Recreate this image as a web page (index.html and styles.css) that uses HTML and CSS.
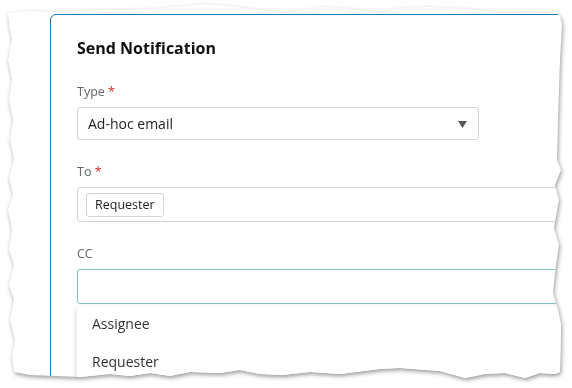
FILE: index.html
```html
<!DOCTYPE html>
<html lang="en">
<head>
    <meta charset="UTF-8">
    <meta name="viewport" content="width=device-width, initial-scale=1.0">
    <title>Send Notification</title>
    <link rel="stylesheet" href="styles.css">
</head>
<body>
    <div class="page">
        <div class="sheet">
            <div class="card">
                <h1>Send Notification</h1>

                <div class="form-group">
                    <label>Type <span class="req">*</span></label>
                    <div class="select">
                        <span>Ad-hoc email</span>
                        <svg class="caret" width="9" height="7" viewBox="0 0 9 7"><polygon points="0,0 9,0 4.5,7" fill="#555"/></svg>
                    </div>
                </div>

                <div class="form-group">
                    <label>To <span class="req">*</span></label>
                    <div class="tags">
                        <span class="chip">Requester</span>
                    </div>
                </div>

                <div class="form-group">
                    <label>CC</label>
                    <div class="tags focused"></div>
                    <ul class="menu">
                        <li>Assignee</li>
                        <li>Requester</li>
                    </ul>
                </div>
            </div>
        </div>
    </div>
</body>
</html>
```

FILE: styles.css
```css
* {
    margin: 0;
    padding: 0;
    box-sizing: border-box;
}

body {
    font-family: 'Open Sans', 'Noto Sans', sans-serif;
    background: #fff;
    width: 572px;
    height: 388px;
    overflow: hidden;
}

.page {
    filter: drop-shadow(1px 2px 2px rgba(0, 0, 0, 0.4));
}

/* torn paper edge */
.sheet {
    width: 572px;
    height: 388px;
    background: #fff;
    overflow: hidden;
    padding: 14px 0 0 50px;
    clip-path: polygon(
        8px 13px, 30px 11px, 60px 12px, 100px 10px, 150px 9px, 185px 6px, 205px 4px, 230px 6px,
        260px 10px, 286px 13px, 320px 7px, 345px 8px, 380px 13px, 400px 8px, 430px 7px, 470px 9px,
        500px 13px, 530px 12px, 556px 13px, 560px 16px, 562px 24px,
        560px 60px, 558px 120px, 557px 160px, 561px 170px, 555px 185px, 559px 200px, 554px 228px,
        559px 245px, 556px 265px, 553px 292px, 558px 310px, 561px 325px, 560px 372px,
        555px 374px, 540px 373px, 525px 378px, 505px 373px, 485px 374px, 465px 378px, 440px 371px,
        400px 368px, 380px 369px, 340px 374px, 310px 372px, 282px 375px, 260px 374px, 240px 370px,
        220px 373px, 190px 372px, 170px 376px, 150px 373px, 130px 376px, 110px 374px, 80px 377px,
        55px 376px, 30px 375px, 14px 372px,
        12px 355px, 15px 340px, 10px 320px, 14px 300px, 9px 285px, 14px 265px, 9px 250px,
        12px 230px, 8px 210px, 13px 195px, 9px 178px, 14px 160px, 10px 140px, 13px 120px,
        9px 100px, 12px 80px, 8px 60px, 12px 40px, 9px 25px
    );
}

.card {
    width: 580px;
    min-height: 420px;
    border: 1px solid #1a7db5;
    border-radius: 6px;
    padding: 23px 26px;
}

h1 {
    font-size: 16px;
    font-weight: 700;
    color: #111;
    line-height: 20px;
    margin-bottom: 26px;
}

.form-group {
    margin-bottom: 24px;
}

label {
    display: block;
    font-size: 12.5px;
    line-height: 16px;
    color: #666;
    margin-bottom: 7px;
}

.req {
    color: #e0302e;
}

.select {
    width: 402px;
    height: 33px;
    border: 1px solid #d4d4d4;
    border-radius: 3px;
    display: flex;
    align-items: center;
    justify-content: space-between;
    padding: 0 11px 0 10px;
    font-size: 14px;
    color: #222;
}

.caret {
    margin-top: 1px;
}

.tags {
    height: 35px;
    border: 1px solid #d4d4d4;
    border-radius: 3px;
    display: flex;
    align-items: center;
    padding: 0 8px;
}

.tags.focused {
    border-color: #86bfca;
}

.chip {
    font-size: 12.5px;
    color: #222;
    border: 1px solid #d4d4d4;
    border-radius: 3px;
    padding: 2px 8px;
    line-height: 18px;
}

.menu {
    list-style: none;
    margin-top: 2px;
    background: #fff;
    box-shadow: 0 2px 6px rgba(0, 0, 0, 0.2);
    border-radius: 3px;
}

.menu li {
    height: 38px;
    padding: 8px 15px;
    font-size: 14px;
    line-height: 20px;
    color: #333;
}
```
